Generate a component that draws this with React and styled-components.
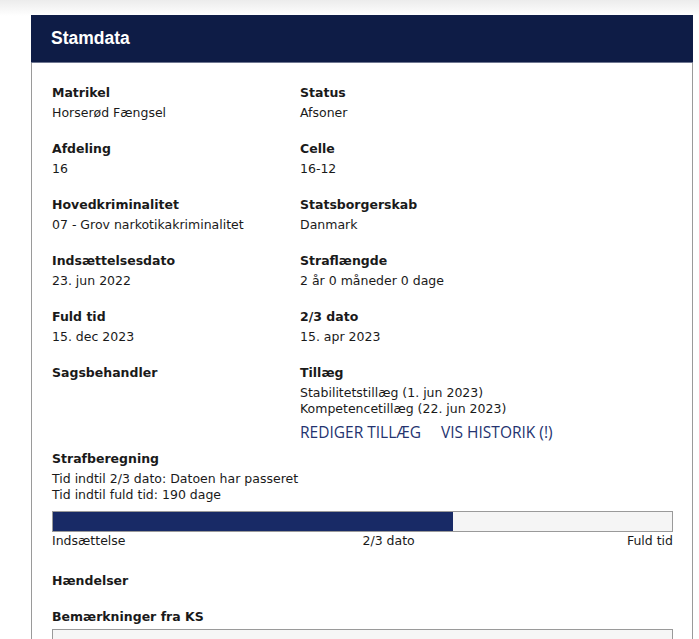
import React from 'react'
import styled, { createGlobalStyle } from 'styled-components'

const GlobalStyle = createGlobalStyle`
  html, body {
    margin: 0;
    padding: 0;
    background: linear-gradient(to bottom, #ececec 0px, #ffffff 16px) no-repeat, #fff;
    font-family: "DejaVu Sans", Verdana, sans-serif;
    color: #1a1a1a;
  }
`

const Page = styled.div`
  padding: 15px 0 0 31px;
  height: 639px;
  box-sizing: border-box;
  overflow: hidden;
`

const Card = styled.section`
  width: 662px;
  border: 1px solid #9a9a9a;
  border-top: none;
  background: #fff;
  box-sizing: border-box;
`

const Header = styled.header`
  height: 48px;
  background: #0e1c46;
  border-bottom: 1px solid #6f7791;
  display: flex;
  align-items: center;
  padding: 0 20px;
  margin: 0 -1px;
  box-sizing: border-box;
`

const Title = styled.h2`
  margin: 0;
  font-family: "Liberation Sans", Arial, sans-serif;
  font-size: 17.5px;
  font-weight: bold;
  color: #fff;
`

const Body = styled.div`
  padding: 22px 19px 0 20px;
`

const Grid = styled.div`
  display: grid;
  grid-template-columns: 248px 1fr;
`

const Field = styled.div`
  margin-bottom: ${p => p.$mb ?? 20}px;
`

const Label = styled.div`
  font-size: 12.5px;
  line-height: 16px;
  font-weight: bold;
  margin-bottom: 4px;
`

const Value = styled.div`
  font-size: 12.5px;
  line-height: 16px;
  min-height: 16px;
`

const Links = styled.div`
  display: flex;
  gap: 20px;
  margin-top: 5px;
`

const ActionLink = styled.a`
  font-family: "Open Sans", "Noto Sans", sans-serif;
  font-size: 15.5px;
  line-height: 20px;
  color: #243370;
  text-transform: uppercase;
  text-decoration: none;
  cursor: pointer;
`

const Bar = styled.div`
  margin-top: 8px;
  height: 21px;
  border: 1px solid #9a9a9a;
  background: #f5f5f5;
  box-sizing: border-box;
`

const Fill = styled.div`
  height: 100%;
  background: #182a66;
`

const Scale = styled.div`
  display: grid;
  grid-template-columns: 1fr 1fr;
  font-size: 12.5px;
  line-height: 16px;
  margin-top: 1px;
`

const ScaleRight = styled.div`
  display: flex;
  justify-content: space-between;
`

const Remarks = styled.div`
  height: 40px;
  border: 1px solid #9a9a9a;
  background: #f6f6f6;
  margin-top: 4px;
`

const fields = [
  ['Matrikel', 'Horserød Fængsel', 'Status', 'Afsoner'],
  ['Afdeling', '16', 'Celle', '16-12'],
  ['Hovedkriminalitet', '07 - Grov narkotikakriminalitet', 'Statsborgerskab', 'Danmark'],
  ['Indsættelsesdato', '23. jun 2022', 'Straflængde', '2 år 0 måneder 0 dage'],
  ['Fuld tid', '15. dec 2023', '2/3 dato', '15. apr 2023'],
]

export default function App() {
  const progress = 64.7
  return (
    <>
      <GlobalStyle />
      <Page>
        <Card>
          <Header>
            <Title>Stamdata</Title>
          </Header>
          <Body>
            <Grid>
              {fields.map(([l1, v1, l2, v2]) => (
                <React.Fragment key={l1}>
                  <Field>
                    <Label>{l1}</Label>
                    <Value>{v1}</Value>
                  </Field>
                  <Field>
                    <Label>{l2}</Label>
                    <Value>{v2}</Value>
                  </Field>
                </React.Fragment>
              ))}
              <Field $mb={8}>
                <Label>Sagsbehandler</Label>
              </Field>
              <Field $mb={9}>
                <Label>Tillæg</Label>
                <Value>Stabilitetstillæg (1. jun 2023)</Value>
                <Value>Kompetencetillæg (22. jun 2023)</Value>
                <Links>
                  <ActionLink>Rediger tillæg</ActionLink>
                  <ActionLink>Vis historik (!)</ActionLink>
                </Links>
              </Field>
            </Grid>

            <Field $mb={24}>
              <Label>Strafberegning</Label>
              <Value>Tid indtil 2/3 dato: Datoen har passeret</Value>
              <Value>Tid indtil fuld tid: 190 dage</Value>
              <Bar>
                <Fill style={{ width: `${progress}%` }} />
              </Bar>
              <Scale>
                <span>Indsættelse</span>
                <ScaleRight>
                  <span>2/3 dato</span>
                  <span>Fuld tid</span>
                </ScaleRight>
              </Scale>
            </Field>

            <Field $mb={20}>
              <Label>Hændelser</Label>
            </Field>

            <Field>
              <Label>Bemærkninger fra KS</Label>
              <Remarks />
            </Field>
          </Body>
        </Card>
      </Page>
    </>
  )
}
